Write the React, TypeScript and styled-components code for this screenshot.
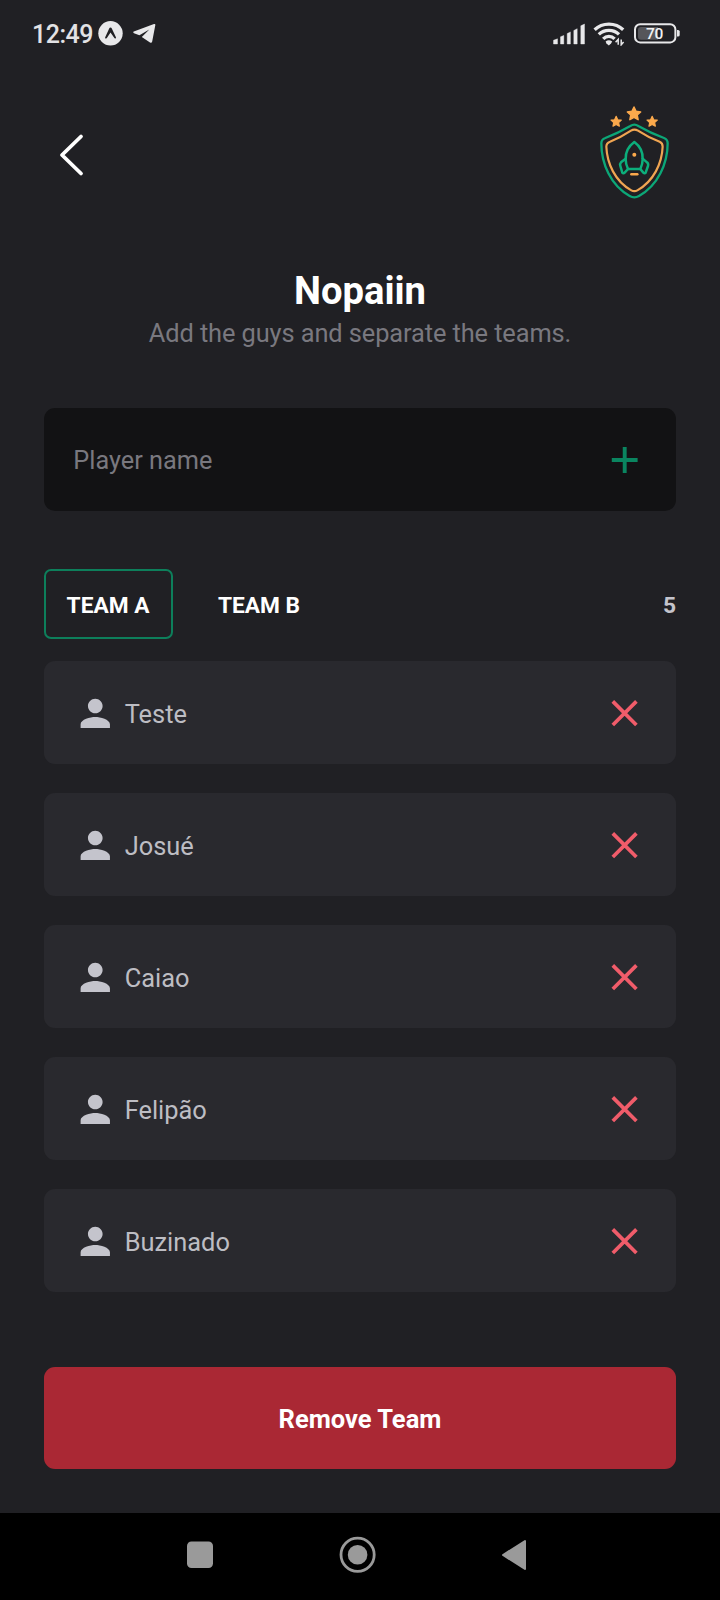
import React from "react";
import styled, { createGlobalStyle } from "styled-components";

const GlobalStyle = createGlobalStyle`
  * { box-sizing: border-box; }
  body { margin: 0; background: #202024; }
  button, input { font: inherit; border: 0; padding: 0; background: none; }
`;

const Screen = styled.div`
  width: 720px;
  height: 1600px;
  display: flex;
  flex-direction: column;
  background: #202024;
  color: #fff;
  font-family: Roboto, sans-serif;
  overflow: hidden;
`;

const StatusBar = styled.div`
  height: 67px;
  flex: none;
  display: flex;
  align-items: center;
  padding: 0 39px 0 32px;
`;

const Time = styled.span`
  width: 66px;
  padding-top: 2px;
  font-size: 25px;
  line-height: 30px;
  font-weight: 500;
  letter-spacing: -0.5px;
  color: #e2e2e5;
`;

const StatusIcon = styled.svg<{ $gap?: number }>`
  display: block;
  flex: none;
  margin-left: ${(p) => p.$gap ?? 0}px;
`;

const Spacer = styled.div`
  flex: 1;
`;

const Header = styled.header`
  height: 169px;
  flex: none;
  display: flex;
  align-items: center;
  justify-content: space-between;
  padding: 0 46.67px 0 56px;
`;

const BackButton = styled.button`
  width: 32px;
  height: 44px;
  margin-top: 6px;
  svg { display: block; }
`;

const Logo = styled.svg`
  display: block;
`;

const Heading = styled.section`
  height: 172px;
  flex: none;
  display: flex;
  flex-direction: column;
  align-items: center;
  padding-top: 32px;
`;

const Title = styled.h1`
  margin: 0;
  font-size: 38.2px;
  line-height: 46px;
  font-weight: 700;
`;

const Subtitle = styled.p`
  margin: 3px 0 0;
  font-size: 25.4px;
  line-height: 32px;
  letter-spacing: -0.1px;
  color: #79787f;
`;

const Content = styled.main`
  display: flex;
  flex-direction: column;
  padding: 0 44px;
`;

const Form = styled.form`
  height: 102.67px;
  display: flex;
  align-items: center;
  justify-content: space-between;
  padding: 1px 37.5px 0 29.33px;
  border-radius: 11px;
  background: #121214;
`;

const NameInput = styled.input`
  width: 400px;
  height: 50px;
  padding-top: 2px;
  font-size: 25.3px;
  color: #fff;
  outline: none;
  &::placeholder { color: #79787f; opacity: 1; }
`;

const IconButton = styled.button`
  display: flex;
  svg { display: block; }
`;

const Tabs = styled.div`
  display: flex;
  align-items: center;
  gap: 22px;
  margin: 58.67px 0 22px;
`;

const Tab = styled.button<{ $active?: boolean }>`
  width: 129px;
  height: 70px;
  padding: 2px 1px 0 0;
  border: 2px solid ${(p) => (p.$active ? "#0d7f5b" : "transparent")};
  border-radius: 7px;
  color: #fff;
  font-size: 22.7px;
  font-weight: 700;
`;

const Count = styled.span`
  margin-left: auto;
  padding-top: 2px;
  font-size: 22.8px;
  font-weight: 700;
  color: #c4c4cc;
`;

const Players = styled.ul`
  display: flex;
  flex-direction: column;
  gap: 29.33px;
  list-style: none;
  margin: 0;
  padding: 0;
`;

const PlayerCard = styled.li`
  height: 102.67px;
  display: flex;
  align-items: center;
  padding: 0 37.5px 0 29.33px;
  border-radius: 11px;
  background: #29292e;
`;

const PlayerName = styled.span`
  flex: 1;
  margin-left: 7.33px;
  padding-top: 2.8px;
  font-size: 25.4px;
  line-height: 32px;
  color: #bdbdc3;
`;

const RemoveButton = styled.button`
  height: 102.67px;
  margin-top: 74.67px;
  padding-top: 2px;
  border-radius: 11px;
  background: #aa2834;
  color: #fff;
  font-size: 25.5px;
  font-weight: 700;
`;

const NavBar = styled.nav`
  height: 87px;
  flex: none;
  margin-top: auto;
  display: flex;
  align-items: center;
  padding: 0 0 4px 186px;
  background: #000;
  svg { display: block; }
`;

const NavButton = styled.button<{ $width: number; $gap?: number }>`
  width: ${(p) => p.$width}px;
  margin-left: ${(p) => p.$gap ?? 0}px;
`;

const starPath = "M0 -1 L.31 -.35 L1 -.27 L.48 .2 L.62 .9 L0 .56 L-.62 .9 L-.48 .2 L-1 -.27 L-.31 -.35Z";

const TeamLogo = () => (
  <Logo width="76.67" height="97.33" viewBox="50 25 230 292" fill="none" strokeLinejoin="round" strokeLinecap="round">
    <g fill="#fba94c" stroke="#fba94c" strokeWidth=".22">
      <path transform="translate(161 57) scale(20)" d={starPath} />
      <path transform="translate(107.5 80.5) scale(15.5)" d={starPath} />
      <path transform="translate(215.5 80.5) scale(15.5)" d={starPath} />
    </g>
    <path
      d="M150 94Q162 86 174 94Q210 115 251 130Q262 134 262 146C262 207 233 272 176 304Q162 312 148 304C91 272 63 207 63 146Q63 134 75 130Q114 115 150 94Z"
      stroke="#0ca777"
      strokeWidth="7"
    />
    <path
      d="M152 108Q162 102 173 108Q203 128 238 141Q247 145 247 156C245 206 220 260 171 287Q162 292 153 287C104 260 80 206 78 156Q78 145 89 141Q122 128 152 108Z"
      stroke="#f0a552"
      strokeWidth="6.5"
    />
    <g stroke="#0cae7b" strokeWidth="7.5">
      <path d="M162 142C144 155 135 175 136 194Q136 209 143 223H180Q187 209 187 194C188 175 180 155 162 142Z" />
      <path d="M136 192L122 203Q118 207 120 214L126 234Q129 238 133 234L143 223M187 192L200 203Q205 207 203 214L196 234Q193 238 189 234L180 223" />
    </g>
    <circle cx="162" cy="180" r="6" fill="#fba94c" />
    <path d="M153 239H171" stroke="#fba94c" strokeWidth="7.5" />
  </Logo>
);

const ExpoIcon = () => (
  <StatusIcon width="25" height="25" viewBox="0 0 25 25">
    <circle cx="12.5" cy="12.3" r="12.2" fill="#e8e8ea" />
    <path
      d="M7.2 16.3Q6.6 17.6 7.8 17.6Q8.8 17.6 9.5 16L12.5 11.4L15.7 16Q16.5 17.6 17.5 17.6Q18.5 17.4 17.8 16.1L13.8 7.4Q13.4 6.5 12.5 6.5Q11.6 6.5 11.2 7.4Z"
      fill="#202024"
    />
  </StatusIcon>
);

const TelegramIcon = () => (
  <StatusIcon $gap={10} width="23" height="21" viewBox="0 0 23 21">
    <path
      d="M.8 8.6L21 1Q22.6.6 22.3 2.3L19.2 18.5Q18.7 20.5 17 19.5L8.8 14.1L16.3 6.4L6.4 12.2L1 10.2Q-.4 9.4.8 8.6Z"
      fill="#e8e8ea"
    />
  </StatusIcon>
);

const SignalIcon = () => (
  <StatusIcon width="33" height="22" viewBox="0 0 33 22">
    <path
      d="M.5 17.2L4.5 15.8V21H.5ZM7.5 13.8L10.8 12.4V21H7.5ZM14.2 10.6L17.4 8.9V21H14.2ZM20.8 7.5L24.2 5.7V21H20.8ZM27.8 2.8L31.5 1V21H27.8Z"
      fill="#e8e8ea"
      stroke="#e8e8ea"
      strokeWidth=".4"
      strokeLinejoin="round"
    />
  </StatusIcon>
);

const WifiIcon = () => (
  <StatusIcon $gap={7} width="32" height="24" viewBox="0 0 32 24">
    <g fill="none" stroke="#e8e8ea" strokeWidth="3.3">
      <path d="M1.6 7.8C9.4 .3 22.4 .3 30.2 7.8" />
      <path d="M5.8 12.4C11.4 7.1 20.4 7.1 26 12.4" />
      <path d="M10.2 16.9C13.4 13.6 18.4 13.6 21.6 16.9" />
    </g>
    <path d="M12.6 19.4Q15.8 16.9 19.2 19.4L18 21.6L15.8 23.4L13.5 21.4Z" fill="#e8e8ea" />
    <path d="M25.2 22.8V17.4L22.6 20.2M28.2 17.4V22.8L30.6 20" fill="none" stroke="#e8e8ea" strokeWidth="1.5" />
  </StatusIcon>
);

const BatteryIcon = () => (
  <StatusIcon $gap={8} width="48" height="21" viewBox="0 0 48 21">
    <rect x="2" y="1.2" width="40.4" height="18.2" rx="5.2" fill="none" stroke="#e8e8ea" strokeWidth="2" />
    <path d="M8 4H25V16.8H8Q5 16.8 5 13.8V7Q5 4 8 4Z" fill="#56565a" />
    <path d="M44 7H45Q46.7 7 46.7 8.5V12Q46.7 13.5 45 13.5H44Z" fill="#e8e8ea" />
    <text x="21.6" y="15.8" textAnchor="middle" fontFamily="Roboto, sans-serif" fontSize="15.5" fontWeight="500" letterSpacing="-.3" fill="#f2f2f3">
      70
    </text>
  </StatusIcon>
);

const PersonIcon = () => (
  <svg width="44" height="44" viewBox="0 0 24 24" fill="#c4c4cc">
    <path
      transform="translate(.15 .2)"
      d="M12 12c2.21 0 4-1.79 4-4s-1.79-4-4-4-4 1.79-4 4 1.79 4 4 4zm0 2c-2.67 0-8 1.34-8 4v2h16v-2c0-2.66-5.33-4-8-4z"
    />
  </svg>
);

const CloseIcon = () => (
  <svg width="28" height="28" viewBox="0 0 28 28" fill="none">
    <path d="M1.8 2.4L25.4 26M25.4 2.4L1.8 26" stroke="#f05c6a" strokeWidth="3.7" />
  </svg>
);

const PlusIcon = () => (
  <svg width="28" height="28" viewBox="0 0 28 28" fill="none">
    <path d="M13.7 1V27M.8 14H26.6" stroke="#0a8560" strokeWidth="3.9" />
  </svg>
);

const players = ["Teste", "Josué", "Caiao", "Felipão", "Buzinado"];

export default function App() {
  return (
    <>
      <GlobalStyle />
      <Screen>
        <StatusBar>
          <Time>12:49</Time>
          <ExpoIcon />
          <TelegramIcon />
          <Spacer />
          <SignalIcon />
          <WifiIcon />
          <BatteryIcon />
        </StatusBar>

        <Header>
          <BackButton aria-label="Back">
            <svg width="32" height="44" viewBox="0 0 32 44" fill="none">
              <path d="M25 3.5L6 22L25 40.5" stroke="#fff" strokeWidth="3.8" strokeLinecap="round" strokeLinejoin="round" />
            </svg>
          </BackButton>
          <TeamLogo />
        </Header>

        <Heading>
          <Title>Nopaiin</Title>
          <Subtitle>Add the guys and separate the teams.</Subtitle>
        </Heading>

        <Content>
          <Form onSubmit={(e) => e.preventDefault()}>
            <NameInput placeholder="Player name" />
            <IconButton aria-label="Add player">
              <PlusIcon />
            </IconButton>
          </Form>

          <Tabs>
            <Tab $active>TEAM A</Tab>
            <Tab>TEAM B</Tab>
            <Count>{players.length}</Count>
          </Tabs>

          <Players>
            {players.map((name) => (
              <PlayerCard key={name}>
                <PersonIcon />
                <PlayerName>{name}</PlayerName>
                <IconButton aria-label={`Remove ${name}`}>
                  <CloseIcon />
                </IconButton>
              </PlayerCard>
            ))}
          </Players>

          <RemoveButton>Remove Team</RemoveButton>
        </Content>

        <NavBar>
          <NavButton $width={28} aria-label="Recents">
            <svg width="28" height="28" viewBox="0 0 28 28">
              <rect x="1" y=".5" width="26" height="26.5" rx="4.5" fill="#9a9a9a" />
            </svg>
          </NavButton>
          <NavButton $width={38} $gap={124.5} aria-label="Home">
            <svg width="38" height="38" viewBox="0 0 38 38">
              <circle cx="18.6" cy="18.8" r="16.6" fill="none" stroke="#9a9a9a" strokeWidth="2.8" />
              <circle cx="18.6" cy="18.8" r="9.8" fill="#9a9a9a" />
            </svg>
          </NavButton>
          <NavButton $width={26} $gap={124.5} aria-label="Back">
            <svg width="26" height="32" viewBox="0 0 26 32">
              <path d="M2 16L24 2V30Z" fill="#9a9a9a" stroke="#9a9a9a" strokeWidth="2" strokeLinejoin="round" />
            </svg>
          </NavButton>
        </NavBar>
      </Screen>
    </>
  );
}
